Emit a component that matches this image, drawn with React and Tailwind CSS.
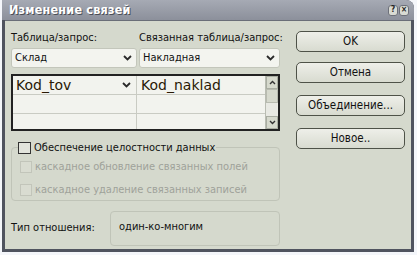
import React from "react";

const F = { fontFamily: "'DejaVu Sans Condensed', 'DejaVu Sans', sans-serif" };
const G = { fontFamily: "'DejaVu Sans', sans-serif" };

function Chevron({ className = "" }) {
  return (
    <svg width="9" height="6" viewBox="0 0 9 6" className={className}>
      <path d="M1 1 L4.5 4.5 L8 1" stroke="#2a2a2a" strokeWidth="1.8" fill="none" />
    </svg>
  );
}

function Combo({ text, w }) {
  return (
    <div className={`flex items-center justify-between h-[20px] ${w} rounded-[3px] border border-[#c3c6bb] bg-[#f3f4ef] pl-[3px] pr-[4px]`}>
      <span className="text-[11px] text-[#111] whitespace-nowrap">{text}</span>
      <Chevron />
    </div>
  );
}

function Btn({ children }) {
  return (
    <div className="h-[21px] w-[109px] rounded-[5px] border border-[#4e5248] bg-gradient-to-b from-[#eeefe9] to-[#d8dbd0] flex items-center justify-center text-[11.5px] text-[#111] whitespace-nowrap">
      {children}
    </div>
  );
}

export default function App() {
  return (
    <div className="w-[417px] h-[255px] bg-[#f4f6fa] overflow-hidden whitespace-nowrap" style={F}>
      <div className="ml-[2px] w-[412px] h-[252px] bg-[#50545f] rounded-tr-[8px] p-[3px] pt-0 flex flex-col">
        <div className="h-[20px] flex items-center justify-between bg-gradient-to-b from-[#a6aab4] to-[#8c909b] -mx-[3px] pl-[7px] pr-[5px] rounded-tr-[8px]">
          <span className="text-[12.5px] font-bold text-white tracking-[0.2px]" style={{ textShadow: "1px 1px 0 #4a4d56" }}>Изменение связей</span>
          <div className="flex gap-[1px]">
            <div className="w-[10px] h-[11px] rounded-[3px] bg-[#d9dbd3] border border-[#6d707a] flex items-center justify-center text-[8px] font-bold leading-none text-[#222]">?</div>
            <div className="w-[10px] h-[11px] rounded-[3px] bg-[#d9dbd3] border border-[#6d707a] flex items-center justify-center text-[8px] font-bold leading-none text-[#222]">×</div>
          </div>
        </div>
        <div className="flex-1 bg-[#d5d9cd] border-t border-[#6a6e78] flex pl-[6px] pt-[10px]">
          <div className="w-[269px] flex flex-col">
            <div className="flex gap-[2px]">
              <div className="flex flex-col">
                <div className="text-[11px] text-[#111] h-[14px] leading-[14px] mb-[3px]">Таблица/запрос:</div>
                <Combo text="Склад" w="w-[126px]" />
              </div>
              <div className="flex flex-col">
                <div className="text-[11px] text-[#111] h-[14px] leading-[14px] mb-[3px]">Связанная таблица/запрос:</div>
                <Combo text="Накладная" w="w-[141px]" />
              </div>
            </div>
            <div className="mt-[6px] h-[57px] border-2 border-[#222] bg-[#f2f3ee] flex">
              <div className="flex-1 flex flex-col">
                <div className="flex h-[19px] border-b border-[#c9cbc3]">
                  <div className="w-[124px] border-r border-[#c9cbc3] flex items-center justify-between pl-[3px] pr-[5px] text-[14px] text-[#2a1a05]" style={G}>
                    <span>Kod_tov</span>
                    <Chevron />
                  </div>
                  <div className="flex-1 flex items-center pl-[4px] text-[14px] text-[#2a1a05]" style={G}>Kod_naklad</div>
                </div>
                <div className="flex h-[19px] border-b border-[#c9cbc3]">
                  <div className="w-[124px] border-r border-[#c9cbc3]" />
                  <div className="flex-1" />
                </div>
                <div className="flex flex-1">
                  <div className="w-[124px] border-r border-[#c9cbc3]" />
                  <div className="flex-1" />
                </div>
              </div>
              <div className="w-[13px] flex flex-col border-l border-[#b9bcb2] bg-[#e8e9e3]">
                <div className="h-[13px] bg-[#d6d9cd] border border-[#a9ada2] flex items-center justify-center">
                  <svg width="7" height="5" viewBox="0 0 7 5"><path d="M1 4 L3.5 1.5 L6 4" stroke="#333" strokeWidth="1.4" fill="none" /></svg>
                </div>
                <div className="h-[14px] bg-[#d6d9cd] border border-[#b8bbb0]" />
                <div className="flex-1" />
                <div className="h-[13px] bg-[#d6d9cd] border border-[#a9ada2] flex items-center justify-center">
                  <svg width="7" height="5" viewBox="0 0 7 5"><path d="M1 1 L3.5 3.5 L6 1" stroke="#333" strokeWidth="1.4" fill="none" /></svg>
                </div>
              </div>
            </div>
            <div className="relative mt-[16px] h-[54px] border border-[#c0c4b8] rounded-[4px] flex flex-col pl-[8px] pt-[11px] gap-[6px]">
              <div className="absolute -top-[8px] left-[6px] flex items-center gap-[3px] bg-[#d5d9cd] pr-[1px]">
                <div className="w-[13px] h-[12px] border border-[#333] bg-[#e2e4dc]" />
                <span className="text-[11px] text-[#111]">Обеспечение целостности данных</span>
              </div>
              <div className="flex items-center gap-[3px]">
                <div className="w-[12px] h-[12px] border border-[#c2c5ba] bg-[#d9dcd1]" />
                <span className="text-[11px] text-[#9fa29a]">каскадное обновление связанных полей</span>
              </div>
              <div className="flex items-center gap-[3px]">
                <div className="w-[12px] h-[12px] border border-[#c2c5ba] bg-[#d9dcd1]" />
                <span className="text-[11px] text-[#9fa29a]">каскадное удаление связанных записей</span>
              </div>
            </div>
            <div className="mt-[10px] flex items-center">
              <span className="w-[99px] text-[11px] text-[#111]">Тип отношения:</span>
              <div className="h-[35px] flex-1 border border-[#c0c4b8] rounded-[4px] pl-[8px] pt-[7px] text-[11px] text-[#111]">один-ко-многим</div>
            </div>
          </div>
          <div className="ml-[16px] flex flex-col">
            <Btn>OK</Btn>
            <div className="mt-[10px]"><Btn>Отмена</Btn></div>
            <div className="mt-[12px]"><Btn>Объединение...</Btn></div>
            <div className="mt-[12px]"><Btn>Новое..</Btn></div>
          </div>
        </div>
      </div>
    </div>
  );
}
